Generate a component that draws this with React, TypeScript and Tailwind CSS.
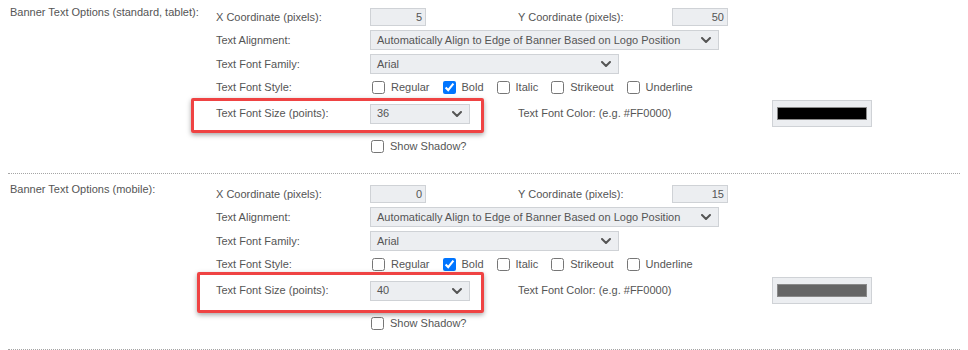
import React from 'react'

function Chevron() {
  return (
    <svg width="10" height="6" viewBox="0 0 10 6" className="shrink-0">
      <polyline points="1,1 5,5 9,1" fill="none" stroke="#555" strokeWidth="2" strokeLinecap="round" strokeLinejoin="round" />
    </svg>
  )
}

function FakeSelect({ value, className }: { value: string; className: string }) {
  return (
    <div className={`flex h-[20px] items-center justify-between border border-[#cfd2d6] bg-[#eceef1] pl-[6px] pr-[7px] ${className}`}>
      <span>{value}</span>
      <Chevron />
    </div>
  )
}

function NumBox({ value }: { value: string }) {
  return (
    <div className="flex h-[18px] w-[56px] items-center justify-end border border-[#cfd2d6] bg-[#eceef1] pr-[3px]">
      {value}
    </div>
  )
}

function Check({ label, checked }: { label: string; checked?: boolean }) {
  return (
    <label className="flex items-center gap-[6px]">
      <input type="checkbox" defaultChecked={checked} className="m-0 h-[13px] w-[13px]" />
      <span>{label}</span>
    </label>
  )
}

function Section({
  title,
  x,
  y,
  size,
  swatch,
  first,
}: {
  title: string
  x: string
  y: string
  size: string
  swatch: string
  first?: boolean
}) {
  return (
    <div
      className={`relative ml-[8px] flex w-[952px] border-b border-dotted border-[#a5a5a5] ${
        first ? 'pt-[6px] pb-[17px]' : 'pt-[9px] pb-[16px]'
      }`}
    >
      {/* red annotation box */}
      <div
        className={`pointer-events-none absolute rounded-[2px] border-[3px] border-[#ef4343] shadow-[0_2px_5px_rgba(0,0,0,0.35)] ${
          first ? 'left-[183px] top-[98px] h-[35px] w-[293px]' : 'left-[189px] top-[98px] h-[41px] w-[287px]'
        }`}
      />
      <div className="w-[208px] shrink-0 pl-[2px] leading-[13px]">{title}</div>
      <div className="mt-[2px] flex flex-col">
        <div className="flex h-[18px] items-center">
          <div className="w-[154px]">X Coordinate (pixels):</div>
          <NumBox value={x} />
          <div className="ml-[92px] w-[154px]">Y Coordinate (pixels):</div>
          <NumBox value={y} />
        </div>
        <div className="mt-[4px] flex h-[20px] items-center">
          <div className="w-[154px]">Text Alignment:</div>
          <FakeSelect className="w-[349px]" value="Automatically Align to Edge of Banner Based on Logo Position" />
        </div>
        <div className="mt-[4px] flex h-[20px] items-center">
          <div className="w-[154px]">Text Font Family:</div>
          <FakeSelect className="w-[249px]" value="Arial" />
        </div>
        <div className="mt-[3px] flex h-[20px] items-center">
          <div className="w-[154px]">Text Font Style:</div>
          <div className="ml-[2px] flex items-center gap-[13px]">
            <Check label="Regular" />
            <Check label="Bold" checked />
            <Check label="Italic" />
            <Check label="Strikeout" />
            <Check label="Underline" />
          </div>
        </div>
        <div className="mt-[3px] flex h-[27px] items-center">
          <div className="w-[154px]">Text Font Size (points):</div>
          <FakeSelect className="w-[100px]" value={size} />
          <div className="ml-[48px] w-[254px]">Text Font Color: (e.g. #FF0000)</div>
          <div className="flex h-[27px] w-[100px] items-center justify-center border border-[#cfd2d6] bg-[#eceef1]">
            <div className={`h-[13px] w-[90px] border border-[#8a8a8a] ${swatch}`} />
          </div>
        </div>
        <div className="mt-[9px] flex h-[20px] items-center">
          <div className="w-[154px]" />
          <div className="ml-[1px]">
            <Check label="Show Shadow?" />
          </div>
        </div>
      </div>
    </div>
  )
}

export default function App() {
  return (
    <div className="h-[350px] w-[968px] overflow-hidden bg-white font-['Liberation_Sans',Arial,sans-serif] text-[11px] text-[#555]">
      <Section first title="Banner Text Options (standard, tablet):" x="5" y="50" size="36" swatch="bg-black" />
      <Section title="Banner Text Options (mobile):" x="0" y="15" size="40" swatch="bg-[#666666]" />
    </div>
  )
}
